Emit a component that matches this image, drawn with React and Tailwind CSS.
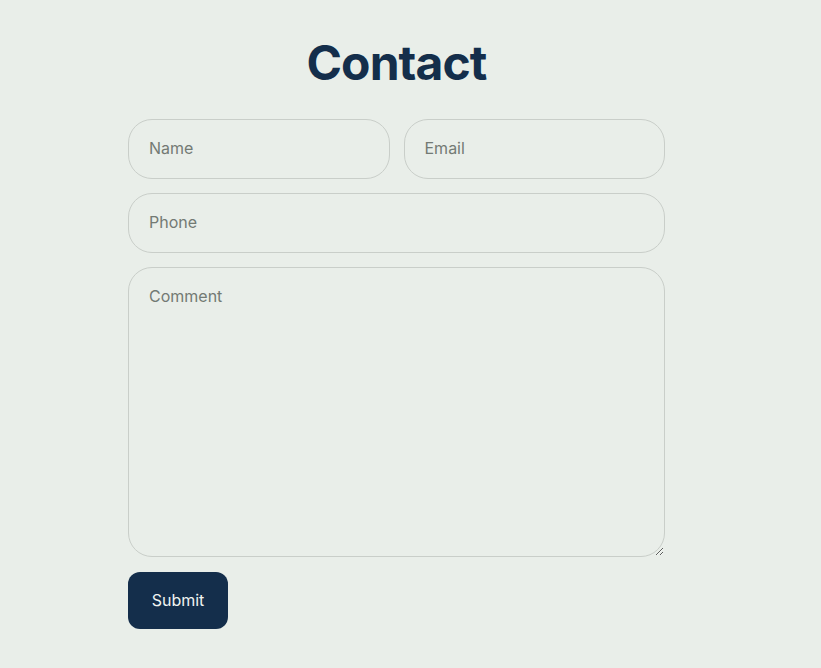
export default function App() {
    return (
        <div className="min-h-[668px] bg-[#e9eee9] font-['Inter','Liberation_Sans',sans-serif]">
            <div className="ml-[128px] w-[537px] pt-[34px]">
                <h1 className="text-center text-[48px] font-bold leading-[58px] tracking-[-0.9px] text-[#142e4b]">Contact</h1>
                <form className="mt-[27px] flex flex-col gap-[14px]" onSubmit={(e) => e.preventDefault()}>
                    <div className="grid grid-cols-2 gap-[14px]">
                        <Field placeholder="Name" />
                        <Field placeholder="Email" />
                    </div>
                    <Field placeholder="Phone" />
                    <textarea
                        placeholder="Comment"
                        className="h-[290px] w-full rounded-[24px] border border-[#c9cec9] bg-transparent px-[20px] pt-[16px] pb-[16px] text-[16px] text-[#1f2937] outline-none placeholder:text-[#737a74]"
                    />
                    <div className="mt-[1px]">
                        <button className="h-[57px] w-[100px] rounded-[12px] bg-[#142e4b] pb-[1px] text-[16px] text-[#f1f4f1]">Submit</button>
                    </div>
                </form>
            </div>
        </div>
    );
}

function Field({ placeholder }) {
    return (
        <input
            placeholder={placeholder}
            className="h-[60px] w-full rounded-[24px] border border-[#c9cec9] bg-transparent px-[20px] pb-[2px] text-[16px] text-[#1f2937] outline-none placeholder:text-[#737a74]"
        />
    );
}
